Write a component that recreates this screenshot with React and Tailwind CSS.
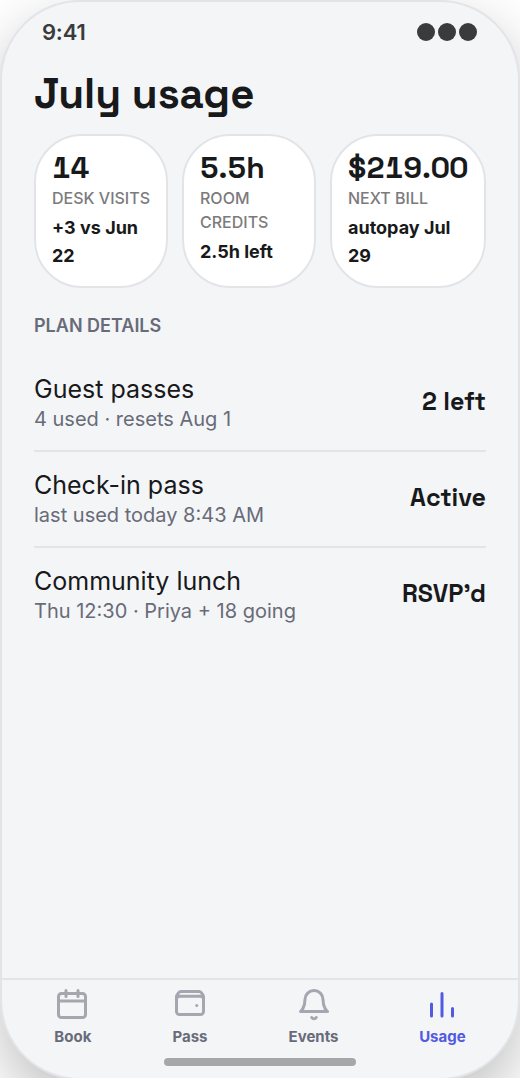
import React, { useState } from "react";

const stats = [
  { value: "14", label: "DESK VISITS", note: "+3 vs Jun 22", width: "w-[134px]" },
  { value: "5.5h", label: "ROOM CREDITS", note: "2.5h left", width: "w-[134px]" },
  { value: "$219.00", label: "NEXT BILL", note: "autopay Jul 29", width: "w-[156px]" },
];

const details = [
  { title: "Guest passes", sub: "4 used · resets Aug 1", value: "2 left" },
  { title: "Check-in pass", sub: "last used today 8:43 AM", value: "Active" },
  { title: "Community lunch", sub: "Thu 12:30 · Priya + 18 going", value: "RSVP’d" },
];

const tabs = [
  {
    name: "Book",
    offset: "-ml-px",
    icon: (
      <>
        <rect x="3" y="5" width="18" height="16" rx="2" />
        <path d="M3 10h18M8 3v4M16 3v4" />
      </>
    ),
  },
  {
    name: "Pass",
    icon: (
      <>
        <rect x="3" y="6.9" width="18" height="12.1" rx="2" />
        <path d="M3 8.6V7.2c0-.6.2-1.1.6-1.6l.9-1.2a1.8 1.8 0 0 1 1.4-.7h12.2a1.8 1.8 0 0 1 1.4.7l.9 1.2c.4.5.6 1 .6 1.6v1.4" />
        <path d="M16.5 13h.01" />
      </>
    ),
  },
  {
    name: "Events",
    icon: (
      <>
        <path d="M18 9a6 6 0 0 0-12 0c0 6-3 8-3 8h18s-3-2-3-8" />
        <path d="M13.5 21a1.8 1.8 0 0 1-3 0" />
      </>
    ),
  },
  {
    name: "Usage",
    icon: <path d="M5 20v-8M12 20V5M19 20v-5" />,
  },
];

const StatCard = ({ stat }) => (
  <div className={`${stat.width} h-[154px] shrink-0 rounded-[48px] border-2 border-[#e3e4e8] bg-white px-4 pt-[15px]`}>
    <div className="mb-px font-['Space_Grotesk',Inter,sans-serif] text-[30px] leading-[34px] font-bold whitespace-nowrap tabular-nums">
      {stat.value}
    </div>
    <div className="text-[16px] leading-6 font-medium text-[#7b7b7d]">{stat.label}</div>
    <div className="mt-1 text-[18px] leading-7 font-bold">{stat.note}</div>
  </div>
);

const App = () => {
  const [activeTab, setActiveTab] = useState("Usage");

  return (
    <div className="h-[1082px] w-[520px] overflow-hidden bg-white font-[Inter,sans-serif] text-[#18191b]">
      <div className="h-[1078px] overflow-hidden">
        <div className="flex h-[1080px] flex-col overflow-hidden rounded-[80px] border-2 border-[#e3e4e7] bg-[#f4f5f7] shadow-[0_24px_60px_rgba(0,0,0,0.25)]">
          <div className="flex h-[60px] shrink-0 items-center justify-between pr-[41px] pl-10 text-[22px] font-semibold tracking-[-0.2px] text-[#3a3b3d]">
            <span>9:41</span>
            <div className="flex gap-[3px]">
              <span className="size-[18px] rounded-full bg-[#3a3b3d]" />
              <span className="size-[18px] rounded-full bg-[#3a3b3d]" />
              <span className="size-[18px] rounded-full bg-[#3a3b3d]" />
            </div>
          </div>

          <main className="flex-1 px-8 pt-2">
            <h1 className="h-16 font-['Space_Grotesk',Inter,sans-serif] text-[42px] leading-[48px] font-bold">July usage</h1>
            <div className="flex gap-[14px]">
              {stats.map((stat) => (
                <StatCard key={stat.label} stat={stat} />
              ))}
            </div>
            <h2 className="mt-6 text-[18px] leading-7 font-semibold text-[#686b78]">PLAN DETAILS</h2>
            <ul className="mt-4">
              {details.map((item, idx) => (
                <li
                  key={item.title}
                  className={`flex h-24 items-center justify-between border-b-2 ${
                    idx < details.length - 1 ? "border-[#e3e4e7]" : "border-transparent"
                  }`}
                >
                  <div>
                    <div className="text-[25px] leading-8">{item.title}</div>
                    <div className="text-[20px] leading-7 text-[#686b78]">{item.sub}</div>
                  </div>
                  <span className="pb-[2px] font-['Space_Grotesk',Inter,sans-serif] text-[25px] font-bold">
                    {item.value}
                  </span>
                </li>
              ))}
            </ul>
          </main>

          <nav className="relative flex h-[100px] shrink-0 justify-around border-t-2 border-[#e3e4e7] px-3 pt-[6px]">
            {tabs.map((tab) => (
              <button
                key={tab.name}
                onClick={() => setActiveTab(tab.name)}
                className={`flex flex-col items-center gap-[2px] text-[15px] leading-[26px] font-bold ${
                  tab.name === activeTab ? "text-[#515ae0]" : "text-[#686b78]"
                }`}
              >
                <svg
                  viewBox="0 0 24 24"
                  className={`size-9 fill-none stroke-2 ${tab.offset || ""} ${
                    tab.name === activeTab ? "stroke-[#515ae0]" : "stroke-[#a5a6af]"
                  }`}
                  strokeLinecap="round"
                  strokeLinejoin="round"
                >
                  {tab.icon}
                </svg>
                {tab.name}
              </button>
            ))}
            <div className="absolute bottom-3 left-1/2 h-2 w-48 -translate-x-1/2 rounded-full bg-[#a6a7a9]" />
          </nav>
        </div>
      </div>
    </div>
  );
};

export default App;
